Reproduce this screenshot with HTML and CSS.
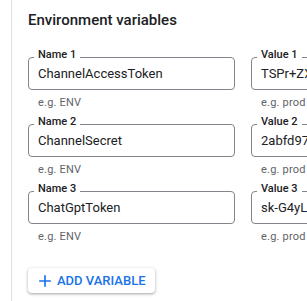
FILE: index.html
```html
<!DOCTYPE html>
<html lang="en">
<head>
  <meta charset="UTF-8">
  <title>Environment variables</title>
  <link rel="stylesheet" href="styles.css">
</head>
<body>
  <div class="panel">
    <h2 class="title">Environment variables</h2>

    <div class="var-list">
      <div class="var-row">
        <div class="field-wrap">
          <div class="field">
            <span class="field-label">Name 1</span>
            <span class="field-value">ChannelAccessToken</span>
          </div>
          <div class="hint">e.g. ENV</div>
        </div>
        <div class="field-wrap">
          <div class="field">
            <span class="field-label">Value 1</span>
            <span class="field-value">TSPr+ZXkq8dVh2mJ</span>
          </div>
          <div class="hint">e.g. prod</div>
        </div>
      </div>

      <div class="var-row">
        <div class="field-wrap">
          <div class="field">
            <span class="field-label">Name 2</span>
            <span class="field-value">ChannelSecret</span>
          </div>
          <div class="hint">e.g. ENV</div>
        </div>
        <div class="field-wrap">
          <div class="field">
            <span class="field-label">Value 2</span>
            <span class="field-value">2abfd97c41e0</span>
          </div>
          <div class="hint">e.g. prod</div>
        </div>
      </div>

      <div class="var-row">
        <div class="field-wrap">
          <div class="field">
            <span class="field-label">Name 3</span>
            <span class="field-value">ChatGptToken</span>
          </div>
          <div class="hint">e.g. ENV</div>
        </div>
        <div class="field-wrap">
          <div class="field">
            <span class="field-label">Value 3</span>
            <span class="field-value">sk-G4yLpQ2x</span>
          </div>
          <div class="hint">e.g. prod</div>
        </div>
      </div>
    </div>

    <button class="add-btn">
      <svg width="20" height="20" viewBox="0 0 24 24"><path d="M19 13h-6v6h-2v-6H5v-2h6V5h2v6h6v2z" fill="currentColor"/></svg>
      Add variable
    </button>
  </div>
</body>
</html>
```

FILE: styles.css
```css
body {
  margin: 0;
  background: #fff;
  font-family: Roboto, 'Liberation Sans', sans-serif;
  color: #202124;
  overflow: hidden;
}

.panel {
  margin-left: 11px;
  border-left: 1px solid #e0e0e0;
  padding: 10px 0 0 16px;
  height: 100vh;
  box-sizing: border-box;
}

.title {
  margin: 0;
  font-size: 15px;
  line-height: 20px;
  font-weight: 500;
}

.var-list {
  margin-top: 27px;
  display: flex;
  flex-direction: column;
  gap: 14px;
}

.var-row {
  display: grid;
  grid-template-columns: 207px 207px;
  gap: 16px;
}

.field {
  position: relative;
  height: 33px;
  box-sizing: border-box;
  border: 1px solid #80868b;
  border-radius: 4px;
  padding: 8px 9px 0;
}

.field-label {
  position: absolute;
  top: -10px;
  left: 5px;
  padding: 0 4px;
  background: #fff;
  font-size: 11px;
  line-height: 13px;
  font-weight: 500;
}

.field-value {
  display: block;
  font-size: 13px;
  line-height: 16px;
  white-space: nowrap;
}

.hint {
  margin-top: 6px;
  padding-left: 10px;
  font-size: 11px;
  line-height: 14px;
  letter-spacing: 0.2px;
  color: #5f6368;
}

.add-btn {
  margin-top: 24px;
  display: flex;
  align-items: center;
  gap: 2px;
  height: 25px;
  padding: 0 9px 0 7px;
  border: none;
  border-radius: 4px;
  background: #fff;
  box-shadow: 0 1px 2px rgba(60,64,67,0.3), 0 1px 3px 1px rgba(60,64,67,0.15);
  color: #1a73e8;
  font-family: inherit;
  font-size: 13px;
  font-weight: 500;
  text-transform: uppercase;
}
```
